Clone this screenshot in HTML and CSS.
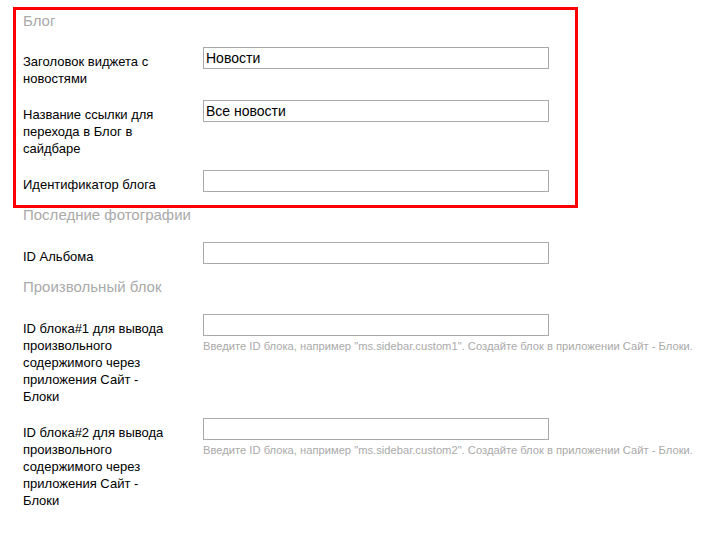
FILE: index.html
```html
<!DOCTYPE html>
<html lang="ru">
<head>
<meta charset="utf-8">
<title>Настройки</title>
<link rel="stylesheet" href="styles.css">
</head>
<body>
<div class="form">
  <h3 class="section">Блог</h3>
  <div class="field">
    <div class="name">Заголовок виджета с новостями</div>
    <div class="value"><input type="text" value="Новости"></div>
  </div>
  <div class="field">
    <div class="name">Название ссылки для перехода в Блог в сайдбаре</div>
    <div class="value"><input type="text" value="Все новости"></div>
  </div>
  <div class="field">
    <div class="name">Идентификатор блога</div>
    <div class="value"><input type="text" value=""></div>
  </div>

  <h3 class="section">Последние фотографии</h3>
  <div class="field">
    <div class="name">ID Альбома</div>
    <div class="value"><input type="text" value=""></div>
  </div>

  <h3 class="section">Произвольный блок</h3>
  <div class="field">
    <div class="name">ID блока#1 для вывода произвольного содержимого через приложения Сайт - Блоки</div>
    <div class="value">
      <input type="text" value="">
      <p class="hint">Введите ID блока, например "ms.sidebar.custom1". Создайте блок в приложении Сайт - Блоки.</p>
    </div>
  </div>
  <div class="field">
    <div class="name">ID блока#2 для вывода произвольного содержимого через приложения Сайт - Блоки</div>
    <div class="value">
      <input type="text" value="">
      <p class="hint">Введите ID блока, например "ms.sidebar.custom2". Создайте блок в приложении Сайт - Блоки.</p>
    </div>
  </div>
  <div class="highlight"></div>
</div>
</body>
</html>
```

FILE: styles.css
```css
html, body {
  margin: 0;
  padding: 0;
  background: #fff;
}

body {
  font-family: "Liberation Sans", Arial, sans-serif;
  color: #000;
}

.form {
  position: relative;
  padding: 12px 0 0 23px;
}

.section {
  margin: 0 0 17px 0;
  font-size: 15px;
  line-height: 18px;
  font-weight: normal;
  color: #aaa;
}

.field + .section {
  margin-bottom: 18px;
}

.field {
  display: flex;
  margin-bottom: 13px;
}

.name {
  width: 180px;
  flex: none;
  padding-top: 6px;
  padding-right: 32px;
  box-sizing: border-box;
  font-size: 13px;
  line-height: 17px;
}

.value {
  flex: 1;
}

.value input {
  display: block;
  width: 346px;
  height: 22px;
  box-sizing: border-box;
  margin: 0;
  padding: 0 2px;
  border: 1px solid #aaa;
  border-radius: 0;
  font-family: "Liberation Sans", Arial, sans-serif;
  font-size: 14px;
  color: #000;
  background: #fff;
}

.hint {
  margin: 3px 0 0 0;
  font-size: 11.2px;
  line-height: 14px;
  color: #aaa;
  white-space: nowrap;
}

.highlight {
  position: absolute;
  left: 13px;
  top: 7px;
  width: 565px;
  height: 201px;
  box-sizing: border-box;
  border: 3px solid #f00;
  pointer-events: none;
}
```
